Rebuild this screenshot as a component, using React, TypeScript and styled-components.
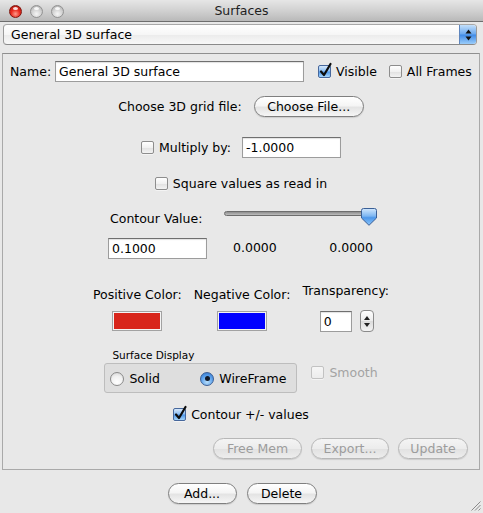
import React from 'react';
import styled, { createGlobalStyle, css } from 'styled-components';

const Global = createGlobalStyle`
  html, body { margin: 0; padding: 0; background: #e8e8e8; }
  body {
    font-family: "DejaVu Sans", "Liberation Sans", sans-serif;
    font-size: 12.5px;
    color: #000;
  }
  * { box-sizing: border-box; }
`;

const Window = styled.div`
  position: relative;
  width: 483px;
  height: 513px;
  background: #e8e8e8;
  display: flex;
  flex-direction: column;
  overflow: hidden;
`;

const TitleBar = styled.div`
  height: 22px;
  flex: none;
  display: grid;
  grid-template-columns: 1fr auto 1fr;
  align-items: center;
  background: linear-gradient(#e6e6e6, #cfcfcf 55%, #b9b9b9);
  border-bottom: 1px solid #6e6e6e;
`;

const Lights = styled.div`
  display: flex;
  gap: 8px;
  padding-left: 9px;
  padding-top: 1px;
`;

const Light = styled.span<{ $red?: boolean }>`
  position: relative;
  width: 13px;
  height: 13px;
  border-radius: 50%;
  ${(p) =>
    p.$red
      ? css`
          background: radial-gradient(circle at 50% 72%, #ff9c8c 0%, #ea2c20 45%, #a3140d 100%);
          border: 1px solid #80160f;
        `
      : css`
          background: radial-gradient(circle at 50% 72%, #f6f6f6 0%, #d2d2d2 50%, #a9a9a9 100%);
          border: 1px solid #929292;
        `}
  &::after {
    content: '';
    position: absolute;
    left: 3px;
    top: 1px;
    width: 5px;
    height: 3px;
    border-radius: 50%;
    background: rgba(255, 255, 255, 0.85);
  }
`;

const Title = styled.div`
  font-size: 12.5px;
  color: #1e1e1e;
`;

const Popup = styled.div`
  margin: 2px 6px 0 3px;
  height: 21px;
  flex: none;
  display: flex;
  align-items: center;
  border: 1px solid #9a9a9a;
  border-top-color: #a8a8a8;
  border-bottom-color: #8a8a8a;
  border-radius: 4px;
  background: linear-gradient(#ffffff, #f6f6f6 50%, #ebebeb 51%, #f8f8f8);
  overflow: hidden;
`;

const PopupText = styled.span`
  flex: 1;
  padding-left: 7px;
`;

const PopupArrow = styled.span`
  width: 17px;
  align-self: stretch;
  display: flex;
  align-items: center;
  justify-content: center;
  border-left: 1px solid #5f86bd;
  background: linear-gradient(#c4e0fb, #6aa8ee 48%, #3f8ae6 52%, #9bcdfa);
`;

const Panel = styled.div`
  margin: 8px 3px 0 2px;
  height: 417px;
  flex: none;
  border: 1px solid #a9a9a9;
  border-top-color: #8f8f8f;
  display: flex;
  flex-direction: column;
  align-items: center;
`;

const Row = styled.div<{ $mt: number; $h?: number }>`
  margin-top: ${(p) => p.$mt}px;
  height: ${(p) => (p.$h ? `${p.$h}px` : 'auto')};
  display: flex;
  align-items: center;
`;

const NameRow = styled(Row)`
  align-self: stretch;
  padding-left: 7px;
`;

const NameLabel = styled.span`
  width: 45px;
`;

const Field = styled.div<{ $w: number; $h?: number }>`
  width: ${(p) => p.$w}px;
  height: ${(p) => p.$h ?? 21}px;
  background: #fff;
  border: 1px solid #9c9c9c;
  border-top-color: #6f6f6f;
  box-shadow: inset 0 1px 1px rgba(0, 0, 0, 0.12);
  display: flex;
  align-items: center;
  padding-left: 3px;
`;

const CheckLabel = styled.label<{ $ml?: number; $disabled?: boolean }>`
  display: flex;
  align-items: center;
  gap: 5px;
  margin-left: ${(p) => p.$ml ?? 0}px;
  color: ${(p) => (p.$disabled ? '#a3a3a3' : '#000')};
`;

const Box = styled.span<{ $on?: boolean; $disabled?: boolean }>`
  position: relative;
  width: 13px;
  height: 13px;
  flex: none;
  border-radius: 2px;
  border: 1px solid ${(p) => (p.$on ? '#46679c' : p.$disabled ? '#c2c2c2' : '#8d8d8d')};
  background: ${(p) =>
    p.$on
      ? 'linear-gradient(#d6e8fb, #8ebff3 45%, #4f98ea 55%, #a6d6fb)'
      : p.$disabled
      ? 'linear-gradient(#f6f6f6, #ececec)'
      : 'linear-gradient(#ffffff, #f1f1f1 50%, #e2e2e2 55%, #f3f3f3)'};
  box-shadow: 0 1px 0 rgba(255, 255, 255, 0.5);
`;

const Mark = styled.svg`
  position: absolute;
  left: 0;
  top: -3px;
  overflow: visible;
`;

const Check = ({ on, disabled }: { on?: boolean; disabled?: boolean }) => (
  <Box $on={on} $disabled={disabled}>
    {on && (
      <Mark width="13" height="14" viewBox="0 0 13 14">
        <path d="M2 8.5 L5 12 L11.5 1" fill="none" stroke="#0c0c0c" strokeWidth="2.2" strokeLinecap="round" strokeLinejoin="round" />
      </Mark>
    )}
  </Box>
);

const Button = styled.button<{ $w: number; $disabled?: boolean }>`
  width: ${(p) => p.$w}px;
  height: 21px;
  padding: 0;
  border-radius: 11px;
  font: inherit;
  font-size: 12.5px;
  border: 1px solid ${(p) => (p.$disabled ? '#b7b7b7' : '#7f7f7f')};
  color: ${(p) => (p.$disabled ? '#9c9c9c' : '#000')};
  background: ${(p) =>
    p.$disabled
      ? 'linear-gradient(#f4f4f4, #ececec 50%, #e2e2e2 55%, #ededed)'
      : 'linear-gradient(#ffffff, #f5f5f5 45%, #e4e4e4 55%, #f6f6f6)'};
  box-shadow: 0 1px 1px rgba(0, 0, 0, 0.12);
`;

const ContourGrid = styled.div`
  margin-top: 15px;
  margin-left: 3px;
  display: grid;
  grid-template-columns: 100px 153px;
  grid-template-rows: 20px 21px;
  column-gap: 16px;
  row-gap: 12px;
`;

const ContourLabel = styled.span`
  align-self: end;
  padding-left: 2px;
  line-height: 15px;
`;

const Slider = styled.div`
  position: relative;
  height: 20px;
`;

const Track = styled.div`
  margin-top: 5px;
  height: 5px;
  border-radius: 3px;
  border: 1px solid #6d6d6d;
  background: linear-gradient(#8d8d8d, #bdbdbd);
`;

const Thumb = styled.svg`
  position: absolute;
  right: 0;
  top: 2px;
`;

const Readouts = styled.div`
  display: flex;
  justify-content: space-between;
  align-items: center;
  padding: 0 4px 3px 9px;
`;

const ColorsRow = styled.div`
  margin-top: 24px;
  display: flex;
  gap: 12px;
  align-items: flex-start;
`;

const ColorCol = styled.div<{ $top: number; $gap: number }>`
  display: flex;
  flex-direction: column;
  align-items: center;
  padding-top: ${(p) => p.$top}px;
  gap: ${(p) => p.$gap}px;
  line-height: 15px;
`;

const Swatch = styled.div<{ $c: string }>`
  width: 50px;
  height: 20px;
  border: 1px solid #a2a2a2;
  box-shadow: inset 0 0 0 1px #f4f4f4;
  background: ${(p) => p.$c};
  padding: 2px;
`;

const SpinRow = styled.div`
  display: flex;
  align-items: center;
  gap: 8px;
  padding-left: 2px;
`;

const Spinner = styled.div`
  width: 14px;
  height: 22px;
  border: 1px solid #8b8b8b;
  border-radius: 4px;
  background: linear-gradient(#ffffff, #ececec 50%, #dcdcdc 52%, #f4f4f4);
  display: flex;
  flex-direction: column;
  align-items: center;
  justify-content: center;
  gap: 3px;
`;

const GroupRow = styled.div`
  margin-top: 17px;
  display: flex;
  align-items: flex-start;
  gap: 14px;
`;

const Group = styled.div`
  display: flex;
  flex-direction: column;
  gap: 1px;
`;

const GroupTitle = styled.span`
  font-size: 10.5px;
  line-height: 13px;
  padding-left: 8px;
`;

const GroupBox = styled.div`
  width: 193px;
  height: 30px;
  border: 1px solid #bdbdbd;
  border-radius: 3px;
  background: #dedede;
  display: flex;
  align-items: center;
  justify-content: space-between;
  padding: 1px 10px 0 5px;
`;

const RadioLabel = styled.label`
  display: flex;
  align-items: center;
  gap: 5px;
`;

const RadioDot = styled.span<{ $on?: boolean }>`
  width: 14px;
  height: 14px;
  border-radius: 50%;
  display: flex;
  align-items: center;
  justify-content: center;
  border: 1px solid ${(p) => (p.$on ? '#3d5f94' : '#8a8a8a')};
  background: ${(p) =>
    p.$on
      ? 'radial-gradient(circle at 50% 75%, #b9def9 0%, #5aa0ec 55%, #2f6fc4 100%)'
      : 'radial-gradient(circle at 50% 75%, #ffffff 0%, #f0f0f0 55%, #cfcfcf 100%)'};
  &::after {
    content: '';
    width: 5px;
    height: 5px;
    border-radius: 50%;
    background: ${(p) => (p.$on ? '#111827' : 'transparent')};
  }
`;

const SmoothWrap = styled.div`
  margin-top: 16px;
`;

const ActionRow = styled.div`
  margin-top: 16px;
  align-self: stretch;
  display: flex;
  justify-content: flex-end;
  gap: 9px;
  padding-right: 11px;
`;

const Footer = styled.div`
  margin-top: 13px;
  display: flex;
  justify-content: center;
  gap: 10px;
  padding-left: 1px;
`;

const Grip = styled.svg`
  position: absolute;
  right: 2px;
  bottom: 2px;
`;

export default function App() {
  return (
    <>
      <Global />
      <Window>
        <TitleBar>
          <Lights>
            <Light $red />
            <Light />
            <Light />
          </Lights>
          <Title>Surfaces</Title>
          <span />
        </TitleBar>

        <Popup>
          <PopupText>General 3D surface</PopupText>
          <PopupArrow>
            <svg width="7" height="12" viewBox="0 0 7 12">
              <path d="M3.5 0.5 L6.5 4.5 L0.5 4.5 Z" fill="#111" />
              <path d="M3.5 11.5 L6.5 7.5 L0.5 7.5 Z" fill="#111" />
            </svg>
          </PopupArrow>
        </Popup>

        <Panel>
          <NameRow $mt={7}>
            <NameLabel>Name:</NameLabel>
            <Field $w={249}>General 3D surface</Field>
            <CheckLabel $ml={14}>
              <Check on />
              Visible
            </CheckLabel>
            <CheckLabel $ml={12}>
              <Check />
              All Frames
            </CheckLabel>
          </NameRow>

          <Row $mt={14} style={{ gap: 12 }}>
            <span>Choose 3D grid file:</span>
            <Button $w={110}>Choose File...</Button>
          </Row>

          <Row $mt={20} style={{ gap: 11 }}>
            <CheckLabel>
              <Check />
              Multiply by:
            </CheckLabel>
            <Field $w={99}>-1.0000</Field>
          </Row>

          <Row $mt={18} $h={15}>
            <CheckLabel>
              <Check />
              Square values as read in
            </CheckLabel>
          </Row>

          <ContourGrid>
            <ContourLabel>Contour Value:</ContourLabel>
            <Slider>
              <Track />
              <Thumb width="16" height="18" viewBox="0 0 16 18">
                <defs>
                  <linearGradient id="thumbG" x1="0" y1="0" x2="0" y2="1">
                    <stop offset="0" stopColor="#d2e8fd" />
                    <stop offset="0.45" stopColor="#7db6f2" />
                    <stop offset="0.55" stopColor="#4d97ea" />
                    <stop offset="1" stopColor="#8cc6fa" />
                  </linearGradient>
                </defs>
                <path d="M2.5 0.5 H13.5 Q15.5 0.5 15.5 2.5 V10 L8 17.3 L0.5 10 V2.5 Q0.5 0.5 2.5 0.5 Z" fill="url(#thumbG)" stroke="#3a5f96" strokeWidth="1" />
              </Thumb>
            </Slider>
            <Field $w={99}>0.1000</Field>
            <Readouts>
              <span>0.0000</span>
              <span>0.0000</span>
            </Readouts>
          </ContourGrid>

          <ColorsRow>
            <ColorCol $top={4} $gap={9}>
              <span>Positive Color:</span>
              <Swatch $c="#d8251b" />
            </ColorCol>
            <ColorCol $top={4} $gap={9}>
              <span>Negative Color:</span>
              <Swatch $c="#0000ff" />
            </ColorCol>
            <ColorCol $top={0} $gap={12}>
              <span>Transparency:</span>
              <SpinRow>
                <Field $w={32}>0</Field>
                <Spinner>
                  <svg width="6" height="4" viewBox="0 0 6 4">
                    <path d="M3 0 L6 4 L0 4 Z" fill="#222" />
                  </svg>
                  <svg width="6" height="4" viewBox="0 0 6 4">
                    <path d="M3 4 L6 0 L0 0 Z" fill="#222" />
                  </svg>
                </Spinner>
              </SpinRow>
            </ColorCol>
          </ColorsRow>

          <GroupRow>
            <Group>
              <GroupTitle>Surface Display</GroupTitle>
              <GroupBox>
                <RadioLabel>
                  <RadioDot />
                  Solid
                </RadioLabel>
                <RadioLabel>
                  <RadioDot $on />
                  WireFrame
                </RadioLabel>
              </GroupBox>
            </Group>
            <SmoothWrap>
              <CheckLabel $disabled>
                <Check disabled />
                Smooth
              </CheckLabel>
            </SmoothWrap>
          </GroupRow>

          <Row $mt={14} $h={15}>
            <CheckLabel>
              <Check on />
              Contour +/- values
            </CheckLabel>
          </Row>

          <ActionRow>
            <Button $w={89} $disabled>Free Mem</Button>
            <Button $w={78} $disabled>Export...</Button>
            <Button $w={70} $disabled>Update</Button>
          </ActionRow>
        </Panel>

        <Footer>
          <Button $w={69}>Add...</Button>
          <Button $w={70}>Delete</Button>
        </Footer>

        <Grip width="11" height="11" viewBox="0 0 11 11">
          <path d="M10.5 1.5 L1.5 10.5 M10.5 5 L5 10.5 M10.5 8.5 L8.5 10.5" stroke="#8a8a8a" strokeWidth="1" />
        </Grip>
      </Window>
    </>
  );
}
